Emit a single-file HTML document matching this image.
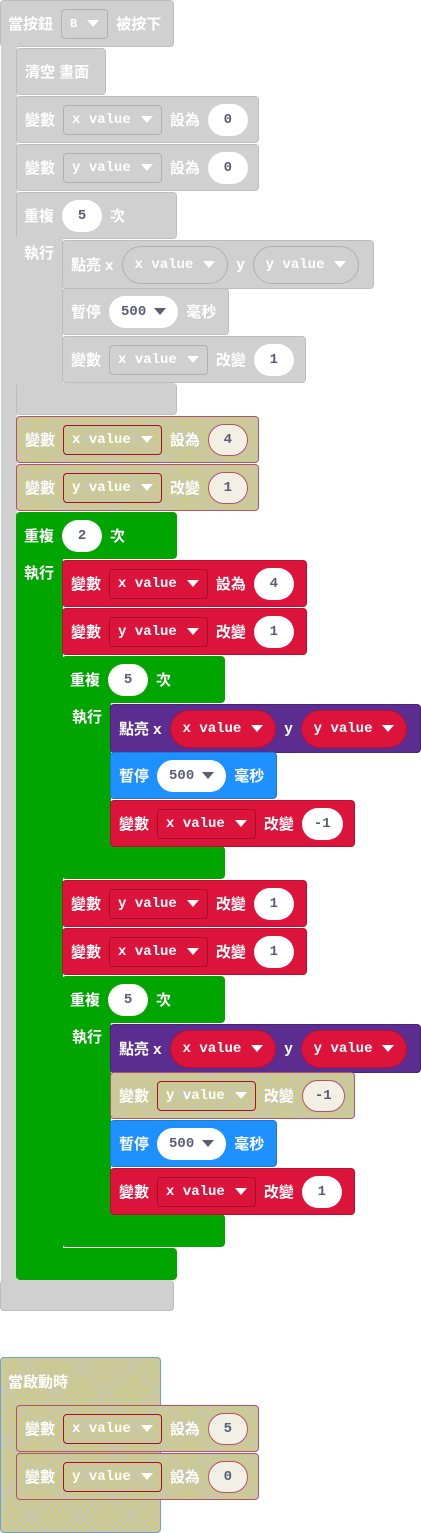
<!DOCTYPE html><html><head><meta charset="utf-8"><style>
body{margin:0;width:421px;height:1533px;background:#fff;position:relative;overflow:hidden}
.r{position:absolute;box-sizing:border-box;border-radius:4px}
.b{position:absolute;box-sizing:border-box;border-radius:4px;display:flex;align-items:center;padding-left:8px;gap:8px;color:#fff;font:bold 15px "Liberation Sans","Noto Sans CJK TC",sans-serif;white-space:nowrap}
.g{background:#d0d0d0;border:1px solid #bdbdbd}
.r.g,.r.gr{border:none}
.red{background:#dc143c;border:1px solid #b8102f}
.gr{background:#00a500;border:1px solid #008a00}
.pu{background:#5c2d91;border:1px solid #4a2277}
.bl{background:#1e90ff;border:1px solid #1a7ad8}
.h{background-color:#c4c4c4;background-image:repeating-linear-gradient(45deg,transparent 0 4px,#d6d24a 4px 5px),repeating-linear-gradient(-45deg,transparent 0 4px,#d6d24a 4px 5px);border:1px solid #b5506a}
.dd{height:30px;box-sizing:border-box;border:1px solid;border-radius:4px;padding:0 8px;font:bold 14px "Liberation Mono",monospace;display:flex;align-items:center;gap:10px}
.g .dd{border-color:#b0b0b0}
.red .dd,.h .dd{border-color:#a50f2d}
.pill{height:32px;min-width:40px;box-sizing:border-box;padding:0 12px;border-radius:16px;background:#fff;color:#575e75;font:bold 14px "Liberation Mono",monospace;display:flex;align-items:center;justify-content:center;gap:8px}
.h .pill{background:#f2f0e4;border:1px solid #b5506a}
.rp{height:38px;border-radius:19px;padding:0 12px;display:flex;align-items:center;gap:10px;font:bold 14px "Liberation Mono",monospace;box-sizing:border-box}
.g .rp{border:1px solid #b0b0b0}
.pu .rp{background:#dc143c;border:1px solid #b8102f}
.t{display:inline-block;width:0;height:0;border-left:6px solid transparent;border-right:6px solid transparent;border-top:7px solid currentColor}
.pill .t{border-top-color:#575e75}
.lab{position:absolute;color:#fff;font:bold 15px "Liberation Sans","Noto Sans CJK TC",sans-serif}
</style></head><body>

<div class="r g" style="left:0;top:0;width:174px;height:47px;border:1px solid #bdbdbd"></div>
<div class="r g" style="left:1px;top:40px;width:16px;height:1262px"></div>
<div class="r g" style="left:0;top:1280px;width:174px;height:31px;border:1px solid #bdbdbd;border-top:none"></div>
<div class="b" style="left:0;top:0;height:47px">當按鈕 <span class="dd" style="border-color:#b0b0b0;font-size:12px">B <span class="t"></span></span> 被按下</div>

<div class="b g" style="left:16px;top:48px;width:90px;height:47px">清空 畫面</div>
<div class="b g" style="left:16px;top:96px;width:243px;height:47px">變數 <span class="dd">x value <span class="t"></span></span> 設為 <span class="pill">0</span></div>
<div class="b g" style="left:16px;top:144px;width:243px;height:47px">變數 <span class="dd">y value <span class="t"></span></span> 設為 <span class="pill">0</span></div>

<div class="r g" style="left:16px;top:192px;width:161px;height:47px;border:1px solid #bdbdbd"></div>
<div class="r g" style="left:17px;top:230px;width:46px;height:160px"></div>
<div class="r g" style="left:16px;top:383px;width:161px;height:32px;border:1px solid #bdbdbd;border-top:none"></div>
<div class="b" style="left:16px;top:192px;height:47px">重複 <span class="pill">5</span> 次</div>
<div class="lab" style="left:24px;top:242px">執行</div>
<div class="b g" style="left:62px;top:240px;width:312px;height:49px">點亮 x <span class="rp">x value <span class="t"></span></span> y <span class="rp">y value <span class="t"></span></span></div>
<div class="b g" style="left:62px;top:288px;width:167px;height:47px">暫停 <span class="pill">500 <span class="t"></span></span> 毫秒</div>
<div class="b g" style="left:62px;top:336px;width:244px;height:47px">變數 <span class="dd">x value <span class="t"></span></span> 改變 <span class="pill">1</span></div>

<div class="b h" style="left:16px;top:416px;width:243px;height:47px">變數 <span class="dd">x value <span class="t"></span></span> 設為 <span class="pill">4</span></div>
<div class="b h" style="left:16px;top:464px;width:243px;height:47px">變數 <span class="dd">y value <span class="t"></span></span> 改變 <span class="pill">1</span></div>

<div class="r gr" style="left:16px;top:512px;width:161px;height:47px"></div>
<div class="r gr" style="left:16px;top:550px;width:47px;height:725px"></div>
<div class="r gr" style="left:16px;top:1248px;width:161px;height:32px"></div>
<div class="b" style="left:16px;top:512px;height:47px">重複 <span class="pill">2</span> 次</div>
<div class="lab" style="left:24px;top:562px">執行</div>

<div class="b red" style="left:62px;top:560px;width:245px;height:47px">變數 <span class="dd">x value <span class="t"></span></span> 設為 <span class="pill">4</span></div>
<div class="b red" style="left:62px;top:608px;width:245px;height:47px">變數 <span class="dd">y value <span class="t"></span></span> 改變 <span class="pill">1</span></div>

<div class="r gr" style="left:62px;top:656px;width:163px;height:47px"></div>
<div class="r gr" style="left:62px;top:695px;width:49px;height:160px"></div>
<div class="r gr" style="left:62px;top:846px;width:163px;height:33px"></div>
<div class="b" style="left:62px;top:656px;height:47px">重複 <span class="pill">5</span> 次</div>
<div class="lab" style="left:72px;top:706px">執行</div>
<div class="b pu" style="left:110px;top:704px;width:311px;height:49px">點亮 x <span class="rp">x value <span class="t"></span></span> y <span class="rp">y value <span class="t"></span></span></div>
<div class="b bl" style="left:110px;top:752px;width:167px;height:47px">暫停 <span class="pill">500 <span class="t"></span></span> 毫秒</div>
<div class="b red" style="left:110px;top:800px;width:245px;height:47px">變數 <span class="dd">x value <span class="t"></span></span> 改變 <span class="pill">-1</span></div>

<div class="b red" style="left:62px;top:880px;width:245px;height:47px">變數 <span class="dd">y value <span class="t"></span></span> 改變 <span class="pill">1</span></div>
<div class="b red" style="left:62px;top:928px;width:245px;height:47px">變數 <span class="dd">x value <span class="t"></span></span> 改變 <span class="pill">1</span></div>

<div class="r gr" style="left:62px;top:976px;width:163px;height:47px"></div>
<div class="r gr" style="left:62px;top:1015px;width:49px;height:220px"></div>
<div class="r gr" style="left:62px;top:1214px;width:163px;height:33px"></div>
<div class="b" style="left:62px;top:976px;height:47px">重複 <span class="pill">5</span> 次</div>
<div class="lab" style="left:72px;top:1026px">執行</div>
<div class="b pu" style="left:110px;top:1024px;width:311px;height:49px">點亮 x <span class="rp">x value <span class="t"></span></span> y <span class="rp">y value <span class="t"></span></span></div>
<div class="b h" style="left:110px;top:1072px;width:245px;height:47px">變數 <span class="dd">y value <span class="t"></span></span> 改變 <span class="pill">-1</span></div>
<div class="b bl" style="left:110px;top:1120px;width:167px;height:47px">暫停 <span class="pill">500 <span class="t"></span></span> 毫秒</div>
<div class="b red" style="left:110px;top:1168px;width:245px;height:47px">變數 <span class="dd">x value <span class="t"></span></span> 改變 <span class="pill">1</span></div>

<div class="r h" style="left:0;top:1357px;width:161px;height:176px;border-color:#6f9fd0"></div>
<div class="lab" style="left:8px;top:1371px">當啟動時</div>
<div class="b h" style="left:16px;top:1405px;width:243px;height:47px">變數 <span class="dd">x value <span class="t"></span></span> 設為 <span class="pill">5</span></div>
<div class="b h" style="left:16px;top:1453px;width:243px;height:47px">變數 <span class="dd">y value <span class="t"></span></span> 設為 <span class="pill">0</span></div>
</body></html>
